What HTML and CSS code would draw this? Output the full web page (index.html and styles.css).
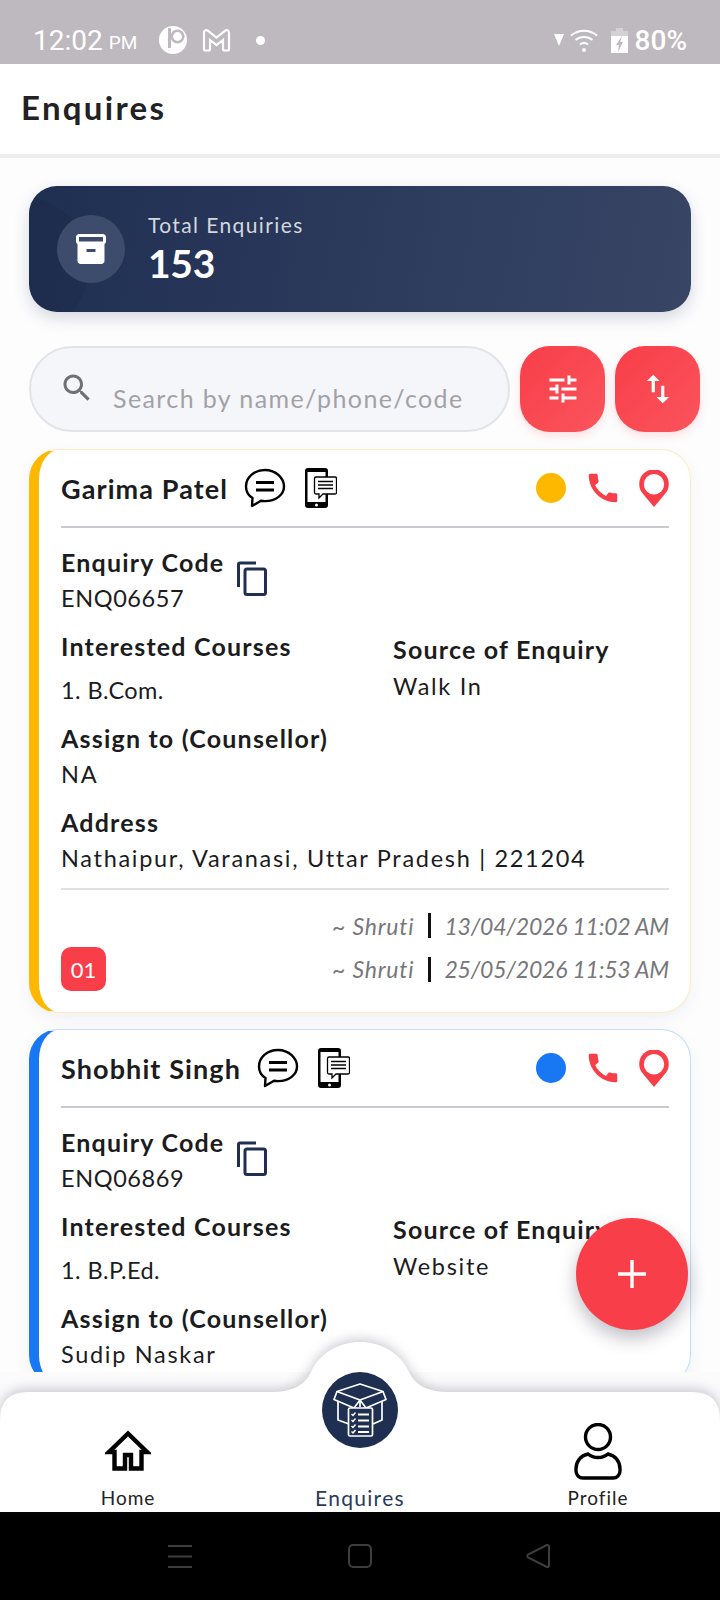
FILE: index.html

```html
<!DOCTYPE html>
<html lang="en">
<head>
  <meta charset="UTF-8">
  <title>Enquires</title>
  <meta name="viewport" content="width=device-width, initial-scale=1.0">
  <link rel="stylesheet" href="styles.css">
</head>
<body>
<div class="screen">

  <div class="status">
    <div class="status-left">
      <span class="time">12:02</span><span class="ampm">PM</span>
      <svg class="st-logo" width="28" height="28" viewBox="0 0 28 28"><circle cx="14" cy="14" r="14" fill="#fff"/><rect x="9" y="2" width="3" height="20" fill="#bdb9be"/><circle cx="18.500" cy="10.500" r="7" fill="#bdb9be"/><circle cx="18.500" cy="10.500" r="4.400" fill="#fff"/></svg>
      <svg class="st-mail" width="29" height="24" viewBox="0 0 29 24"><path d="M2 4.500c0-2 2-3 3.500-2l9 7 9-7c1.500-1 3.500 0 3.500 2v16.500c0 1-.5 1.500-1.500 1.500h-3c-1 0-1.500-.5-1.500-1.500v-9l-6.500 5-6.500-5v9c0 1-.5 1.500-1.500 1.500h-3c-1 0-1.500-.5-1.500-1.500z" fill="none" stroke="#fff" stroke-width="2.200"/></svg>
      <span class="st-dot"></span>
    </div>
    <div class="status-right">
      <svg width="10" height="12" viewBox="0 0 10 12"><path d="M0 0h10l-5 12z" fill="#fff"/></svg>
      <svg class="st-wifi" width="28" height="24" viewBox="0 0 28 24"><g fill="none" stroke="#fff" stroke-width="2"><path d="M1 7.500c7.500-6.500 18.500-6.500 26 0"/><path d="M5.500 12c5-4 12-4 17 0"/><path d="M10 16.500c2.500-2 5.500-2 8 0"/></g><circle cx="14" cy="22" r="2" fill="#fff"/></svg>
      <svg class="st-batt" width="17" height="25" viewBox="0 0 17 25"><path d="M5 0h7v3h5v5H0V3h5z" fill="#fff" opacity=".35"/><path d="M0 8h17v17H0z" fill="#fff"/><path d="M11 8 5 17h3l-1 7 5-10H9z" fill="#bdb9be"/></svg>
      <span class="pct">80%</span>
    </div>
  </div>

  <div class="appbar">Enquires</div>

  <div class="content">
    <div class="stats">
      <div class="stats-icon">
        <svg width="36" height="36" viewBox="0 0 24 24"><path fill="#fff" d="M20 2H4c-1 0-2 .9-2 2v3.010c0 .72.43 1.340 1 1.690V20c0 1.100 1.100 2 2 2h14c.9 0 2-.9 2-2V8.700c.57-.35 1-.97 1-1.690V4c0-1.100-1-2-2-2zm-5 12H9v-2h6v2zm5-7H4V4h16v3z"/></svg>
      </div>
      <div>
        <div class="stats-label">Total Enquiries</div>
        <div class="stats-value">153</div>
      </div>
    </div>

    <div class="tools">
      <div class="search">
        <svg width="36" height="36" viewBox="0 0 24 24"><path fill="#707075" d="M15.500 14h-.79l-.28-.27C15.410 12.590 16 11.110 16 9.500 16 5.910 13.090 3 9.500 3S3 5.910 3 9.500 5.910 16 9.500 16c1.610 0 3.090-.59 4.230-1.570l.27.28v.79l5 4.990L20.490 19l-4.990-5zm-6 0C7.010 14 5 11.990 5 9.500S7.010 5 9.500 5 14 7.010 14 9.500 11.990 14 9.500 14z"/></svg>
        <span class="placeholder">Search by name/phone/code</span>
      </div>
      <div class="tool-btn">
        <svg width="36" height="36" viewBox="0 0 24 24"><path fill="#fff" d="M3 17v2h6v-2H3zM3 5v2h10V5H3zm10 16v-2h8v-2h-8v-2h-2v6h2zM7 9v2H3v2h4v2h2V9H7zm14 4v-2H11v2h10zm-6-4h2V7h4V5h-4V3h-2v6z"/></svg>
      </div>
      <div class="tool-btn">
        <svg width="38" height="38" viewBox="0 0 24 24"><path fill="#fff" d="M16 17.010V10h-2v7.010h-3L15 21l4-3.990h-3zM9 3L5 6.990h3V14h2V6.990h3L9 3z"/></svg>
      </div>
    </div>

    <div class="card card-yellow">
      <div class="card-head">
        <span class="name">Garima Patel</span>
        <svg class="ic-chat" width="42" height="40" viewBox="0 0 42 40"><path d="M21 2C10 2 2 9.500 2 18.500c0 5 2.500 9 6.500 11.500L8 38l9-5.200c1.300.2 2.700.3 4 .3 11 0 19-6.500 19-14.600S32 2 21 2z" fill="none" stroke="#000" stroke-width="2.400" stroke-linejoin="round"/><path d="M12 14.500h18M12 22h18" stroke="#000" stroke-width="3"/></svg>
        <svg class="ic-sms" width="32" height="40" viewBox="0 0 32 40"><rect x="0" y="0" width="23" height="40" rx="3" fill="#000"/><rect x="2.500" y="4" width="18" height="30" fill="#fff"/><circle cx="11.500" cy="37" r="1.500" fill="#fff"/><path d="M11 9h19a1.500 1.500 0 0 1 1.500 1.500v14a1.500 1.500 0 0 1-1.500 1.500H18l-4 4v-4h-3a1.500 1.500 0 0 1-1.500-1.500v-14A1.500 1.500 0 0 1 11 9z" fill="#fff" stroke="#000" stroke-width="1.300"/><path d="M13 13.500h15M13 17h15M13 20.500h15" stroke="#000" stroke-width="1.500"/></svg>
        <span class="head-right">
          <span class="dot"></span>
          <svg width="38" height="38" viewBox="0 0 24 24"><path fill="#f83e48" d="M20.010 15.380c-1.230 0-2.420-.2-3.530-.56-.35-.12-.74-.03-1.010.24l-1.570 1.970c-2.830-1.350-5.480-3.900-6.890-6.830l1.950-1.660c.27-.28.35-.67.24-1.020-.37-1.110-.56-2.300-.56-3.530 0-.54-.45-.99-.99-.99H4.190C3.650 3 3 3.240 3 3.990 3 13.280 10.730 21 20.010 21c.71 0 .99-.63.99-1.180v-3.450c0-.54-.45-.99-.99-.99z"/></svg>
          <svg width="30" height="37" viewBox="0 0 30 37"><path fill="#f83e48" fill-rule="evenodd" d="M15 37 4.500 24.500A14.800 14.800 0 1 1 25.500 24.500zM15 4a10.200 10.200 0 1 0 0 20.400 10.200 10.200 0 0 0 0-20.400z"/></svg>
        </span>
      </div>
      <div class="card-body">
        <div class="field code-field">
          <div>
            <div class="label">Enquiry Code</div>
            <div class="value code-value">ENQ06657</div>
          </div>
          <svg class="ic-copy" width="30" height="35" viewBox="0 0 30 35"><g fill="none" stroke="#1f2f52" stroke-width="3"><path d="M19 2H3a1.500 1.500 0 0 0-1.500 1.500V26"/><rect x="8" y="8" width="20.500" height="25.500" rx="2"/></g></svg>
        </div>
        <div class="two-col">
          <div class="field">
            <div class="label">Interested Courses</div>
            <div class="value list-value">1. B.Com.</div>
          </div>
          <div class="field source">
            <div class="label">Source of Enquiry</div>
            <div class="value">Walk In</div>
          </div>
        </div>
        <div class="field">
          <div class="label">Assign to (Counsellor)</div>
          <div class="value">NA</div>
        </div>
        <div class="field">
          <div class="label">Address</div>
          <div class="value">Nathaipur, Varanasi, Uttar Pradesh | 221204</div>
        </div>
      </div>
      <div class="card-foot">
        <div class="foot-line"><span class="by">~ Shruti</span><i class="bar"></i><span>13/04/2026 11:02 AM</span></div>
        <div class="foot-row">
          <span class="badge">01</span>
          <div class="foot-line"><span class="by">~ Shruti</span><i class="bar"></i><span>25/05/2026 11:53 AM</span></div>
        </div>
      </div>
    </div>

    <div class="card card-blue">
      <div class="card-head">
        <span class="name">Shobhit Singh</span>
        <svg class="ic-chat" width="42" height="40" viewBox="0 0 42 40"><path d="M21 2C10 2 2 9.500 2 18.500c0 5 2.500 9 6.500 11.500L8 38l9-5.200c1.300.2 2.700.3 4 .3 11 0 19-6.500 19-14.600S32 2 21 2z" fill="none" stroke="#000" stroke-width="2.400" stroke-linejoin="round"/><path d="M12 14.500h18M12 22h18" stroke="#000" stroke-width="3"/></svg>
        <svg class="ic-sms" width="32" height="40" viewBox="0 0 32 40"><rect x="0" y="0" width="23" height="40" rx="3" fill="#000"/><rect x="2.500" y="4" width="18" height="30" fill="#fff"/><circle cx="11.500" cy="37" r="1.500" fill="#fff"/><path d="M11 9h19a1.500 1.500 0 0 1 1.500 1.500v14a1.500 1.500 0 0 1-1.500 1.500H18l-4 4v-4h-3a1.500 1.500 0 0 1-1.500-1.500v-14A1.500 1.500 0 0 1 11 9z" fill="#fff" stroke="#000" stroke-width="1.300"/><path d="M13 13.500h15M13 17h15M13 20.500h15" stroke="#000" stroke-width="1.500"/></svg>
        <span class="head-right">
          <span class="dot"></span>
          <svg width="38" height="38" viewBox="0 0 24 24"><path fill="#f83e48" d="M20.010 15.380c-1.230 0-2.420-.2-3.530-.56-.35-.12-.74-.03-1.010.24l-1.570 1.970c-2.830-1.350-5.480-3.900-6.890-6.830l1.950-1.660c.27-.28.35-.67.24-1.020-.37-1.110-.56-2.300-.56-3.530 0-.54-.45-.99-.99-.99H4.190C3.650 3 3 3.240 3 3.990 3 13.280 10.730 21 20.010 21c.71 0 .99-.63.99-1.180v-3.450c0-.54-.45-.99-.99-.99z"/></svg>
          <svg width="30" height="37" viewBox="0 0 30 37"><path fill="#f83e48" fill-rule="evenodd" d="M15 37 4.500 24.500A14.800 14.800 0 1 1 25.500 24.500zM15 4a10.200 10.200 0 1 0 0 20.400 10.200 10.200 0 0 0 0-20.400z"/></svg>
        </span>
      </div>
      <div class="card-body">
        <div class="field code-field">
          <div>
            <div class="label">Enquiry Code</div>
            <div class="value code-value">ENQ06869</div>
          </div>
          <svg class="ic-copy" width="30" height="35" viewBox="0 0 30 35"><g fill="none" stroke="#1f2f52" stroke-width="3"><path d="M19 2H3a1.500 1.500 0 0 0-1.500 1.500V26"/><rect x="8" y="8" width="20.500" height="25.500" rx="2"/></g></svg>
        </div>
        <div class="two-col">
          <div class="field">
            <div class="label">Interested Courses</div>
            <div class="value list-value">1. B.P.Ed.</div>
          </div>
          <div class="field source">
            <div class="label">Source of Enquiry</div>
            <div class="value">Website</div>
          </div>
        </div>
        <div class="field">
          <div class="label">Assign to (Counsellor)</div>
          <div class="value">Sudip Naskar</div>
        </div>
      </div>
    </div>
  </div>

  <div class="fab">
    <svg width="30" height="30" viewBox="0 0 30 30"><path d="M15 1v28M1 15h28" stroke="#fff" stroke-width="3.400"/></svg>
  </div>

  <div class="nav">
    <svg class="nav-shape" width="720" height="170" viewBox="0 0 720 170"><path fill="#fff" d="M0 78Q0 50 28 50H272Q302 50 311 30C320 10 340 0 360 0S400 10 409 30Q418 50 448 50H692Q720 50 720 78V170H0Z"/></svg>
    <div class="nav-items">
      <div class="nav-item item-home">
        <svg width="46" height="41" viewBox="0 0 46 41"><path d="M23 3.500 4 22H9.500V38.500H20V25H26V38.500H36.500V22H42Z" fill="none" stroke="#000" stroke-width="4.400"/></svg>
        <span>Home</span>
      </div>
      <div class="nav-item item-center">
        <div class="nav-circle">
          <svg width="54" height="54" viewBox="0 0 54 54"><g fill="none" stroke="#fff" stroke-width="1.700" stroke-linejoin="round"><path d="M27 1 50 8.500 27 17 4 8.500Z"/><path d="M4 8.500 1 16.500 21 25 27 17 33 25 53 16.500 50 8.500"/><path d="M5 19V37L16 41M49 19V37L40 41M27 17V24"/><rect x="15.500" y="25" width="24" height="28" rx="1.500" fill="#1f2f52"/></g><g fill="none" stroke="#fff" stroke-width="1.500"><path d="M18.500 31l1.500 1.500 2.500-3M18.500 37l1.500 1.500 2.500-3M18.500 43l1.500 1.500 2.500-3M18.500 48.500l1.500 1.500 2.500-3"/></g><path d="M25 31.500h11M25 37.500h11M25 43.500h11M25 49h11" stroke="#fff" stroke-width="2"/></svg>
        </div>
        <span>Enquires</span>
      </div>
      <div class="nav-item item-profile">
        <svg width="48" height="57" viewBox="0 0 48 57"><ellipse cx="24" cy="14" rx="12.500" ry="12.500" fill="none" stroke="#000" stroke-width="3.400"/><path d="M14 31C6 33 2 39 2 46v2c0 4 3 7 7 7H39c4 0 7-3 7-7v-2c0-7-4-13-12-15-3 2.500-6 3.500-10 3.500S17 33.500 14 31Z" fill="none" stroke="#000" stroke-width="3.400"/></svg>
        <span>Profile</span>
      </div>
    </div>
  </div>

  <div class="sysbar">
    <svg width="24" height="24" viewBox="0 0 24 24"><path d="M0 2h24M0 12.500h24M0 23h24" stroke="#3d3d3d" stroke-width="2"/></svg>
    <svg width="24" height="24" viewBox="0 0 24 24"><rect x="1" y="1" width="22" height="22" rx="4" fill="none" stroke="#3d3d3d" stroke-width="2"/></svg>
    <svg width="24" height="26" viewBox="0 0 24 26"><path d="M21 2a1.500 1.500 0 0 1 2 1.500v19a1.500 1.500 0 0 1-2 1.500L2 14.500a2 2 0 0 1 0-3Z" fill="none" stroke="#3d3d3d" stroke-width="2"/></svg>
  </div>

</div>
</body>
</html>
```

FILE: styles.css

```css
* {
  box-sizing: border-box;
}
body {
  margin: 0;
  font-family: "Lato", "Liberation Sans", sans-serif;
  color: #1c1c1e;
  background: #fff;
}
.screen {
  position: relative;
  width: 720px;
  height: 1600px;
  display: flex;
  flex-direction: column;
  overflow: hidden;
}

/* status bar */
.status {
  height: 64px;
  flex: none;
  background: #bdb9be;
  color: #fff;
  font-family: "Roboto", sans-serif;
  display: flex;
  justify-content: space-between;
  padding: 25px 33px 0;
}
.status-left, .status-right {
  display: flex;
  align-items: center;
  height: 30px;
}
.time {
  font-size: 28px;
}
.ampm {
  font-size: 19px;
  margin: 5px 0 0 6px;
}
.st-logo {
  margin-left: 22px;
}
.st-mail {
  margin-left: 15px;
}
.st-dot {
  width: 9px;
  height: 9px;
  border-radius: 50%;
  background: #fff;
  margin-left: 25px;
}
.st-wifi {
  margin-left: 6px;
}
.st-batt {
  margin-left: 13px;
}
.pct {
  font-size: 28px;
  font-weight: 500;
  margin-left: 7px;
}

/* app bar */
.appbar {
  height: 94px;
  flex: none;
  padding: 23px 0 0 21px;
  font-size: 33px;
  line-height: 40px;
  font-weight: 700;
  letter-spacing: 2.300px;
  color: #222;
  border-bottom: 4px solid #eeeeef;
}

/* main list */
.content {
  flex: 1;
  min-height: 0;
  overflow: hidden;
  background: #fdfdfe;
  padding: 28px 20px 0 29px;
}
.stats {
  position: relative;
  width: 662px;
  height: 126px;
  border-radius: 28px;
  background: linear-gradient(100deg, #1f2f52, #384565);
  box-shadow: 0 6px 16px rgba(31, 47, 82, 0.18);
  display: flex;
  align-items: center;
  padding-left: 28px;
  gap: 23px;
  overflow: hidden;
  color: #fff;
}
.stats::before {
  content: "";
  position: absolute;
  left: -80px;
  top: 10px;
  width: 140px;
  height: 140px;
  border-radius: 50%;
  background: rgba(20, 24, 40, 0.12);
}
.stats-icon {
  position: relative;
  width: 68px;
  height: 68px;
  border-radius: 50%;
  background: #3d4c6c;
  display: flex;
  align-items: center;
  justify-content: center;
}
.stats-label {
  font-size: 21px;
  line-height: 28px;
  letter-spacing: 1.400px;
  color: #d5d7de;
}
.stats-value {
  font-size: 39px;
  line-height: 48px;
  font-weight: 700;
  letter-spacing: -0.3px;
}

.tools {
  display: flex;
  margin-top: 34px;
  gap: 10px;
}
.search {
  width: 481px;
  height: 86px;
  border: 2px solid #e3e4e8;
  border-radius: 43px;
  background: #f5f6fa;
  display: flex;
  align-items: flex-start;
  padding: 22px 0 0 28px;
  gap: 18px;
}
.placeholder {
  font-size: 25px;
  line-height: 34px;
  letter-spacing: 1.400px;
  color: #a2a2a6;
  margin-top: 11px;
  white-space: nowrap;
}
.tool-btn {
  width: 85px;
  height: 86px;
  border-radius: 30px;
  background: linear-gradient(135deg, #f83e48, #fb545d);
  box-shadow: 0 4px 10px rgba(248, 62, 72, 0.16);
  display: flex;
  align-items: center;
  justify-content: center;
}

/* enquiry cards */
.card {
  width: 662px;
  margin-top: 17px;
  background: #fff;
  border-radius: 30px;
  border: 1px solid;
  border-left-width: 10px;
  padding: 0 21px 0 22px;
  box-shadow: 0 6px 16px rgba(31, 47, 82, 0.06);
}
.card-yellow {
  border-color: #fdebc4;
  border-left-color: #ffb800;
}
.card-blue {
  margin-top: 16px;
  border-color: #c5dcfb;
  border-left-color: #1877f2;
}
.card-blue .dot {
  background: #1877f2;
}
.card-head {
  height: 78px;
  display: flex;
  align-items: center;
  border-bottom: 2px solid #c9c9d0;
}
.name {
  font-size: 27px;
  font-weight: 700;
  letter-spacing: 1.100px;
  white-space: nowrap;
}
.ic-chat {
  margin-left: 16px;
}
.ic-sms {
  margin-left: 19px;
}
.head-right {
  margin-left: auto;
  display: flex;
  align-items: center;
}
.dot {
  width: 30px;
  height: 30px;
  border-radius: 50%;
  background: #ffb800;
}
.head-right svg:nth-child(2) {
  margin-left: 18px;
}
.head-right svg:nth-child(3) {
  margin-left: 17px;
}
.card-body {
  padding-top: 16px;
}
.field {
  margin-bottom: 12px;
}
.label {
  font-size: 25px;
  line-height: 36px;
  font-weight: 700;
  letter-spacing: 1.200px;
  white-space: nowrap;
}
.value {
  font-size: 23.500px;
  line-height: 36px;
  letter-spacing: 1.700px;
  white-space: nowrap;
}
.code-value {
  letter-spacing: 0.6px;
}
.code-field {
  display: flex;
}
.ic-copy {
  margin: 17px 0 0 13px;
}
.two-col {
  display: grid;
  grid-template-columns: 332px 1fr;
}
.list-value {
  margin-top: 8px;
  letter-spacing: 0.4px;
}
.source {
  margin-top: 3px;
}
.source .value {
  margin-top: 1px;
}
.card-foot {
  margin-top: 11px;
  border-top: 2px solid #e0e0e4;
  padding: 17px 0 21px;
}
.foot-row {
  display: flex;
  justify-content: space-between;
  align-items: center;
  margin-top: 3px;
}
.foot-line {
  display: flex;
  justify-content: flex-end;
  align-items: center;
  height: 37px;
  font-size: 23px;
  font-style: italic;
  letter-spacing: -0.2px;
  color: #77777c;
  white-space: nowrap;
}
.by {
  letter-spacing: 0.8px;
}
.bar {
  width: 3px;
  height: 25px;
  background: #111;
  margin: 0 13px 0 14px;
}
.badge {
  width: 45px;
  height: 44px;
  border-radius: 10px;
  background: #f83e48;
  color: #fff;
  font-size: 22px;
  display: flex;
  align-items: center;
  justify-content: center;
}

/* floating button */
.fab {
  position: absolute;
  left: 576px;
  top: 1218px;
  width: 112px;
  height: 112px;
  border-radius: 50%;
  background: #f83e48;
  box-shadow: 0 8px 18px rgba(40, 40, 70, 0.3);
  display: flex;
  align-items: center;
  justify-content: center;
}

/* bottom nav */
.nav {
  position: relative;
  height: 140px;
  flex: none;
  background: #fbfbfc;
}
.nav-shape {
  position: absolute;
  left: 0;
  top: -30px;
  filter: drop-shadow(0 -3px 6px rgba(40, 45, 70, 0.24));
}
.nav-items {
  position: relative;
  height: 140px;
  display: grid;
  grid-template-columns: 256px 208px 256px;
}
.nav-item {
  display: flex;
  flex-direction: column;
  align-items: center;
  justify-content: flex-end;
  padding-bottom: 38px;
  font-size: 19px;
  line-height: 24px;
  letter-spacing: 1px;
  color: #222;
}
.item-home svg {
  margin-bottom: 15px;
}
.item-center {
  font-size: 21px;
  letter-spacing: 1.300px;
  color: #2b3a5c;
}
.nav-circle {
  width: 76px;
  height: 76px;
  border-radius: 50%;
  background: #1f2f52;
  display: flex;
  align-items: center;
  justify-content: center;
  margin-bottom: 38px;
}
.item-profile {
  padding-left: 12px;
}
.item-profile svg {
  margin-bottom: 6px;
}

/* android buttons */
.sysbar {
  height: 88px;
  flex: none;
  background: #000;
  display: grid;
  grid-template-columns: 168px 24px 156px 24px 154px 24px;
  align-items: center;
}
.sysbar svg:nth-child(1) {
  grid-column: 2;
}
.sysbar svg:nth-child(2) {
  grid-column: 4;
}
.sysbar svg:nth-child(3) {
  grid-column: 6;
}
```
